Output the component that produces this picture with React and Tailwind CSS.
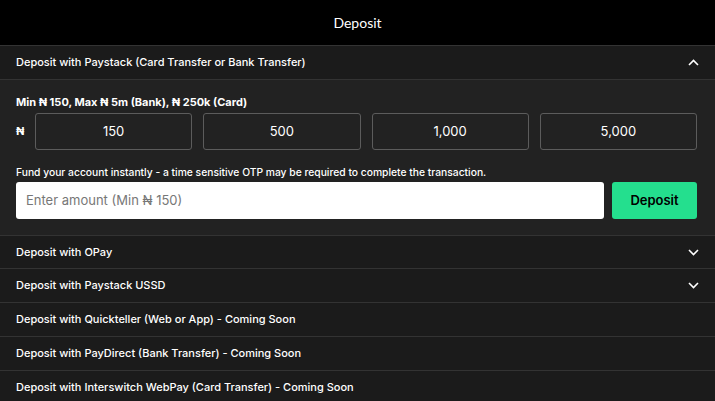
import React from "react";

const Chevron = ({ up }) => (
  <svg width="11" height="7" viewBox="0 0 11 7" className="shrink-0">
    <path
      d={up ? "M1 6 L5.5 1.5 L10 6" : "M1 1 L5.5 5.5 L10 1"}
      fill="none"
      stroke="#ffffff"
      strokeWidth="1.6"
    />
  </svg>
);

const Row = ({ label, chevron, h = "h-[34px]" }) => (
  <div className={`flex ${h} shrink-0 items-center justify-between border-b border-[#333333] bg-[#1b1b1b] pl-4 pr-4`}>
    <span className="text-[11px] font-medium text-white">{label}</span>
    {chevron && <Chevron />}
  </div>
);

export default function App() {
  const amounts = ["150", "500", "1,000", "5,000"];
  return (
    <div
      className="flex h-[401px] w-[715px] flex-col overflow-hidden bg-[#1b1b1b] text-white"
      style={{ fontFamily: "Inter, 'Noto Sans', sans-serif" }}
    >
      <div className="flex h-[46px] shrink-0 items-center justify-center border-b border-[#333333] bg-black">
        <span className="text-[14px]" style={{ fontFamily: "Lato, sans-serif" }}>Deposit</span>
      </div>
      <div className="flex h-[34px] shrink-0 items-center justify-between border-b border-[#333333] bg-[#1b1b1b] pl-4 pr-4">
        <span className="text-[11px] font-medium">Deposit with Paystack (Card Transfer or Bank Transfer)</span>
        <Chevron up />
      </div>
      <div className="flex h-[156px] shrink-0 flex-col border-b border-[#333333] bg-[#222222] pl-4 pr-[18px] pt-[15px]">
        <div className="text-[11px] font-bold leading-[14px]">Min ₦ 150, Max ₦ 5m (Bank), ₦ 250k (Card)</div>
        <div className="mt-[4px] flex items-center gap-[11px]">
          <span className="w-[8px] text-[11px] font-bold">₦</span>
          {amounts.map((a) => (
            <div
              key={a}
              className="flex h-[37px] flex-1 items-center justify-center rounded-[3px] border border-[#5c5c5c] text-[13px]"
            >
              {a}
            </div>
          ))}
        </div>
        <div className="mt-[15px] text-[10.3px] font-medium leading-[14px]">
          Fund your account instantly - a time sensitive OTP may be required to complete the transaction.
        </div>
        <div className="mt-[3px] flex gap-[8px]">
          <div className="flex h-[37px] flex-1 items-center rounded-[3px] bg-white px-[10px] text-[13px] text-[#777777]">
            Enter amount (Min ₦ 150)
          </div>
          <div className="flex h-[37px] w-[85px] items-center justify-center rounded-[3px] bg-[#24df8e] text-[13px] font-semibold text-black">
            Deposit
          </div>
        </div>
      </div>
      <Row label="Deposit with OPay" chevron h="h-[33px]" />
      <Row label="Deposit with Paystack USSD" chevron />
      <Row label="Deposit with Quickteller (Web or App) - Coming Soon" />
      <Row label="Deposit with PayDirect (Bank Transfer) - Coming Soon" />
      <Row label="Deposit with Interswitch WebPay (Card Transfer) - Coming Soon" />
    </div>
  );
}
